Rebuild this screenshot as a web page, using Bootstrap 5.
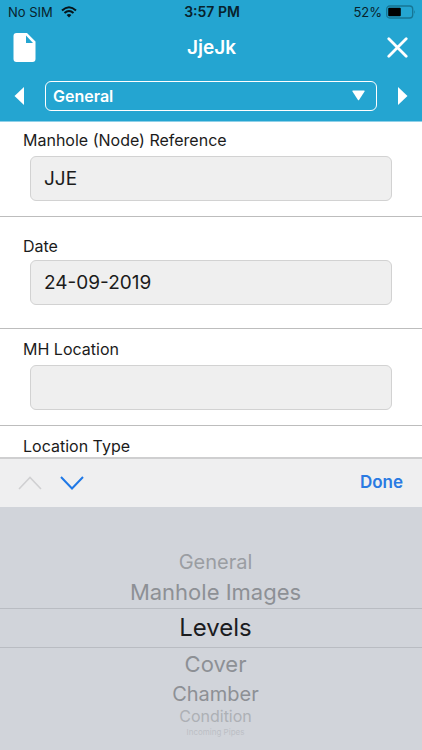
<!DOCTYPE html>
<html lang="en">
<head>
<meta charset="utf-8">
<meta name="viewport" content="width=device-width, initial-scale=1">
<title>JjeJk</title>
<link href="https://cdn.jsdelivr.net/npm/bootstrap@5.3.0/dist/css/bootstrap.min.css" rel="stylesheet">
<style>
body { font-family: Inter, "Liberation Sans", sans-serif; color: #1b1b1b; background: #fff; }
svg { display: block; }
.icon-btn { border: 0; background: none; padding: 0; color: inherit; }
.app-header { background: #24a5d1; border-bottom: 1px solid #8fd0e8; }
.status-bar { height: 24px; padding: 0 6px 0 8px; font-size: 13px; line-height: 24px; color: #08222c; }
.status-bar > * { flex: 1 1 0; }
.status-bar .clock { font-size: 14px; font-weight: 600; }
.title-bar { height: 47px; padding: 0 14px 0 13px; }
.title-bar h1 { font-size: 19px; line-height: 24px; font-weight: 600; }
.section-bar { height: 50px; padding: 0 14px; gap: 20px; }
.section-bar .form-select { height: 30px; padding: 0 7px; font-size: 16px; line-height: 28px; font-weight: 600; color: #fff; background: none; border: 1px solid #fff; border-radius: 6px; }
.select-caret { right: 12px; top: 9px; pointer-events: none; }
.field { border-bottom: 1px solid #bdbdbd; padding: 7px 30px 15px; }
.field-date { padding: 18px 30px 23px; }
.field-type { padding-top: 9px; }
.field .form-label { display: block; margin: 0 0 5px -7px; font-size: 16px; line-height: 22px; }
.field-date .form-label { margin-bottom: 3px; }
.field-location { padding-top: 9px; }
.field .form-control { height: 45px; padding: 0 13px; font-size: 19px; color: #1b1b1b; background: #efefef; border: 1px solid #d2d2d2; border-radius: 6px; }
.input-panel { background: #d1d4da; }
.assist-bar { height: 50px; padding: 0 19px 0 18px; gap: 18px; background: #efeff0; border-top: 2px solid #cfcfd0; }
.done-btn { font-size: 17px; font-weight: 600; color: #2a7ae2; }
.wheel { height: 243px; padding-top: 42px; }
.wheel button { display: block; width: 100%; padding-left: 9px; text-align: center; color: #8d9095; }
.wheel .far { font-size: 20px; line-height: 27px; color: #9a9da2; }
.wheel .near { font-size: 22px; line-height: 32px; }
.wheel .current { font-size: 24px; line-height: 38px; color: #1b1c1f; border-top: 1px solid #b9bcc2; border-bottom: 1px solid #b9bcc2; }
.wheel .after { font-size: 20px; line-height: 28px; }
.wheel .fading { font-size: 16px; line-height: 16px; color: #adb0b5; }
.wheel .last { margin-top: 3px; font-size: 8px; line-height: 10px; color: #bcbfc5; }
</style>
<script src="https://cdn.jsdelivr.net/npm/bootstrap@5.3.0/dist/js/bootstrap.bundle.min.js"></script>
</head>
<body>
<div class="d-flex flex-column vh-100 overflow-hidden">
  <header class="app-header flex-shrink-0 text-white">
    <div class="status-bar d-flex align-items-center">
      <div class="d-flex align-items-center gap-2">
        <span>No SIM</span>
        <svg width="16" height="12" viewBox="0 0 16 12" fill="none" stroke="#06141a" stroke-width="2"><path d="M1 4.400Q8-2 15 4.400M3.500 7.100Q8 3 12.500 7.100"/><path d="M5.600 8.900Q8 7 10.400 8.900L8 11.500Z" fill="#06141a" stroke="none"/></svg>
      </div>
      <div class="clock text-center">3:57 PM</div>
      <div class="d-flex align-items-center justify-content-end gap-1">
        <span>52%</span>
        <svg width="30" height="14" viewBox="0 0 30 14"><rect x=".7" y="1" width="26" height="12" rx="3" fill="none" stroke="#167594" stroke-width="1.300"/><rect x="2.200" y="2.800" width="12.600" height="8.400" rx="1" fill="#000"/><path d="M28 5q1.600 2 0 4z" fill="#167594"/></svg>
      </div>
    </div>
    <div class="title-bar d-flex align-items-center justify-content-between">
      <button type="button" class="icon-btn" aria-label="Document"><svg width="23" height="29" viewBox="0 0 23 29" fill="#fff"><path fill-rule="evenodd" d="M3.500 0H14L22.500 8.500V26a3 3 0 0 1-3 3h-16a3 3 0 0 1-3-3V3a3 3 0 0 1 3-3zM13 2.500V10h7z"/></svg></button>
      <h1 class="m-0">JjeJk</h1>
      <button type="button" class="icon-btn" aria-label="Close"><svg width="21" height="21" viewBox="0 0 21 21" stroke="#fff" stroke-width="2.800" stroke-linecap="round"><path d="M1.800 1.800l17.400 17.400M19.200 1.800L1.800 19.200"/></svg></button>
    </div>
    <div class="section-bar d-flex align-items-center">
      <button type="button" class="icon-btn" aria-label="Previous section"><svg width="11" height="18" viewBox="0 0 11 18" fill="#fff"><path d="M10 0v18L.5 9z"/></svg></button>
      <div class="position-relative flex-grow-1">
        <select class="form-select" aria-label="Section">
          <option>General</option><option>Manhole Images</option><option>Levels</option><option>Cover</option><option>Chamber</option><option>Condition</option><option>Incoming Pipes</option>
        </select>
        <svg class="select-caret position-absolute" width="13" height="11" viewBox="0 0 13 11" fill="#fff"><path d="M1 .5h11q1 0 .5 1L7.200 9.700q-.7 1-1.400 0L.5 1.500Q0 .5 1 .5z"/></svg>
      </div>
      <button type="button" class="icon-btn" aria-label="Next section"><svg width="11" height="18" viewBox="0 0 11 18" fill="#fff"><path d="M1 0v18l9.500-9z"/></svg></button>
    </div>
  </header>

  <form class="flex-grow-1 overflow-hidden">
    <div class="field">
      <label class="form-label" for="reference">Manhole (Node) Reference</label>
      <input class="form-control" id="reference" type="text" value="JJE">
    </div>
    <div class="field field-date">
      <label class="form-label" for="date">Date</label>
      <input class="form-control" id="date" type="text" value="24-09-2019">
    </div>
    <div class="field field-location">
      <label class="form-label" for="location">MH Location</label>
      <input class="form-control" id="location" type="text">
    </div>
    <div class="field field-type">
      <div class="form-label">Location Type</div>
    </div>
  </form>

  <div class="input-panel flex-shrink-0">
    <div class="assist-bar d-flex align-items-center">
      <button type="button" class="icon-btn" aria-label="Previous field"><svg width="24" height="14" viewBox="0 0 24 14" fill="none" stroke="#d0d0d2" stroke-width="1.600"><path d="M1 13L12 1.500 23 13"/></svg></button>
      <button type="button" class="icon-btn" aria-label="Next field"><svg width="24" height="14" viewBox="0 0 24 14" fill="none" stroke="#1f78e6" stroke-width="2"><path d="M1 1l11 11.500L23 1"/></svg></button>
      <button type="button" class="icon-btn done-btn ms-auto">Done</button>
    </div>
    <div class="wheel" role="group" aria-label="Section picker">
      <button type="button" class="icon-btn far">General</button>
      <button type="button" class="icon-btn near">Manhole Images</button>
      <button type="button" class="icon-btn current" aria-pressed="true">Levels</button>
      <button type="button" class="icon-btn near">Cover</button>
      <button type="button" class="icon-btn after">Chamber</button>
      <button type="button" class="icon-btn fading">Condition</button>
      <button type="button" class="icon-btn last">Incoming Pipes</button>
    </div>
  </div>
</div>
</body>
</html>
